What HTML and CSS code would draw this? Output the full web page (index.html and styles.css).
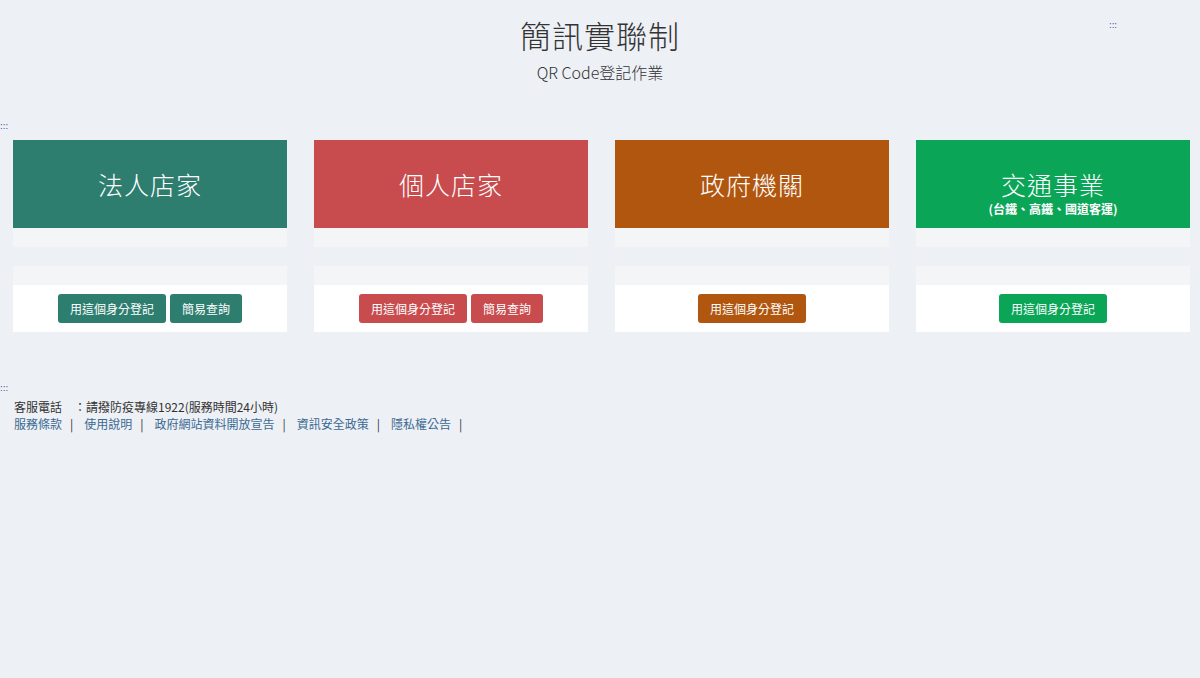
FILE: index.html
```html
<!DOCTYPE html>
<html lang="zh-Hant-TW">
<head>
  <meta charset="UTF-8" />
  <meta name="viewport" content="width=device-width, initial-scale=1.0"/>
  <title>簡訊實聯制</title>
  <link rel="stylesheet" href="styles.css">
</head>
<body>
  <header class="top">
    <a class="accesskey accesskey-top" href="#" title="上方功能區塊">:::</a>
    <h1>簡訊實聯制</h1>
    <p class="subtitle">QR Code登記作業</p>
  </header>

  <a class="accesskey accesskey-main" href="#" title="中央內容區塊">:::</a>
  <main class="cards">
    <div class="card">
      <div class="card-head teal">法人店家</div>
      <div class="card-strip"></div>
      <div class="card-foot">
        <div class="card-strip"></div>
        <div class="card-actions">
          <button class="btn teal">用這個身分登記</button>
          <button class="btn teal">簡易查詢</button>
        </div>
      </div>
    </div>

    <div class="card">
      <div class="card-head red">個人店家</div>
      <div class="card-strip"></div>
      <div class="card-foot">
        <div class="card-strip"></div>
        <div class="card-actions">
          <button class="btn red">用這個身分登記</button>
          <button class="btn red">簡易查詢</button>
        </div>
      </div>
    </div>

    <div class="card">
      <div class="card-head orange">政府機關</div>
      <div class="card-strip"></div>
      <div class="card-foot">
        <div class="card-strip"></div>
        <div class="card-actions">
          <button class="btn orange">用這個身分登記</button>
        </div>
      </div>
    </div>

    <div class="card">
      <div class="card-head green">
        <span>交通事業</span>
        <small>(台鐵、高鐵、國道客運)</small>
      </div>
      <div class="card-strip"></div>
      <div class="card-foot">
        <div class="card-strip"></div>
        <div class="card-actions">
          <button class="btn green">用這個身分登記</button>
        </div>
      </div>
    </div>
  </main>

  <a class="accesskey accesskey-foot" href="#" title="下方功能區塊">:::</a>
  <footer>
    <p class="hotline">客服電話　：請撥防疫專線1922(服務時間24小時)</p>
    <nav class="links">
      <a href="#">服務條款</a><span class="sep">|</span>
      <a href="#">使用說明</a><span class="sep">|</span>
      <a href="#">政府網站資料開放宣告</a><span class="sep">|</span>
      <a href="#">資訊安全政策</a><span class="sep">|</span>
      <a href="#">隱私權公告</a><span class="sep">|</span>
    </nav>
  </footer>
</body>
</html>
```

FILE: styles.css
```css
body {
  background: #edf0f5;
  color: #333;
  font-family: "Noto Sans CJK TC", "Noto Sans", sans-serif;
  margin: 0;
  padding: 0;
}

.top {
  position: relative;
  text-align: center;
  padding-top: 14px;
  height: 104px;
}

.top h1 {
  margin: 0;
  font-size: 31px;
  font-weight: 300;
  line-height: 42px;
  color: #333;
  letter-spacing: 1px;
}

.subtitle {
  margin: 4px 0 0;
  font-size: 16px;
  font-weight: 300;
  line-height: 24px;
  color: #333;
}

.accesskey {
  display: block;
  width: 12px;
  font-family: "DejaVu Sans", sans-serif;
  font-size: 8px;
  line-height: 10px;
  height: 10px;
  color: #2a4d8f;
  text-decoration: none;
  letter-spacing: 0;
}

.accesskey-top {
  position: absolute;
  top: 21px;
  left: 1107px;
}

.accesskey-main {
  margin-top: 4px;
}

.cards {
  display: grid;
  grid-template-columns: repeat(4, 1fr);
  column-gap: 27px;
  padding: 8px 10px 0 13px;
}

.card-head {
  height: 88px;
  display: flex;
  flex-direction: column;
  align-items: center;
  justify-content: center;
  color: #fff;
  font-size: 25px;
  font-weight: 300;
  line-height: 34px;
  letter-spacing: 1px;
}

.card-head small {
  font-size: 12px;
  line-height: 16px;
  font-weight: bold;
  letter-spacing: 0;
  margin-bottom: -16px;
}

.card-strip {
  height: 19px;
  background: #f4f5f7;
}

.card-foot {
  margin-top: 19px;
  background: #fff;
}

.card-actions {
  display: flex;
  justify-content: center;
  gap: 4px;
  padding: 9px 0 9px;
}

.btn {
  border: none;
  border-radius: 3px;
  color: #fff;
  font-family: inherit;
  font-size: 12px;
  height: 29px;
  padding: 0 12px;
  cursor: pointer;
}

.teal { background: #2e7e70; }
.red { background: #c84b4e; }
.orange { background: #b1560f; }
.green { background: #0aa557; }

.accesskey-foot {
  margin-top: 52px;
}

footer {
  padding: 4px 14px;
  font-size: 12px;
}

.hotline {
  margin: 0;
  line-height: 17px;
}

.links {
  display: flex;
  line-height: 17px;
  color: #333;
}

.links a {
  color: #3b6a92;
  text-decoration: none;
}

.sep {
  margin: 0 11px 0 8px;
  color: #333;
}
```
